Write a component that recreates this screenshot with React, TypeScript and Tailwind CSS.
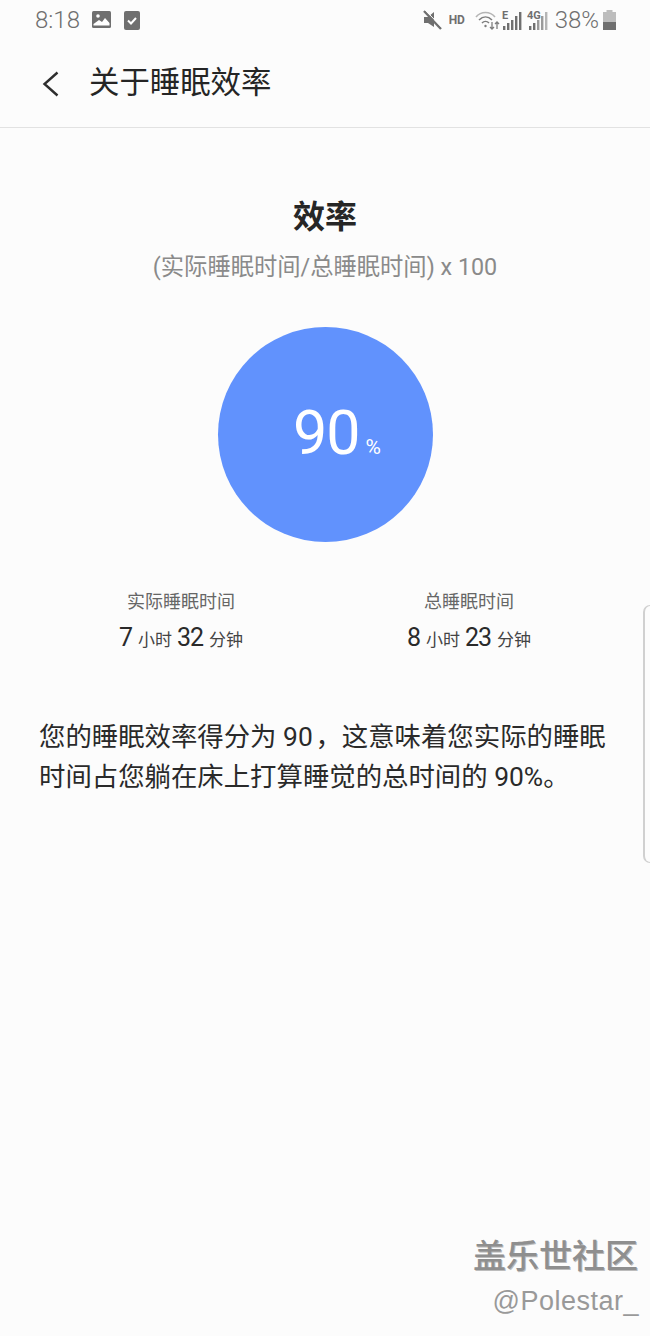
const cjk = "font-['Roboto','Noto_Sans_CJK_SC',sans-serif]"

const StatusBar = () => (
    <div className="flex h-[40px] items-center justify-between pl-[35px] pr-[34px] text-[#6f6f6f]">
        <div className="flex items-center">
            <span className="text-[24px] leading-none font-light">8:18</span>
            <svg className="ml-[12px]" width="19" height="18" viewBox="0 0 19 18">
                <rect width="19" height="17" y="0" rx="1.5" fill="#6f6f6f" />
                <circle cx="6" cy="5" r="1.8" fill="#fff" />
                <path d="M1.5 13 L7 9 L10 11 L13 7 L17.5 12 V14.5 H1.5 Z" fill="#fff" />
            </svg>
            <svg className="ml-[13px]" width="16" height="19" viewBox="0 0 16 19">
                <rect width="16" height="19" rx="2" fill="#6f6f6f" />
                <path d="M4 9.5 L7 12.5 L12 7" stroke="#fff" strokeWidth="2" fill="none" />
            </svg>
        </div>
        <div className="flex items-center">
            <svg width="19" height="20" viewBox="0 0 19 20">
                <path d="M1 7 H5 L11 2 V17 L5 13 H1 Z" fill="#6f6f6f" />
                <path d="M1 1 L18 19" stroke="#6f6f6f" strokeWidth="2.4" />
                <path d="M2.2 0 L19 17.5" stroke="#fcfcfc" strokeWidth="1" />
            </svg>
            <span className="ml-[7px] w-[17px] text-[12px] leading-none font-bold font-['Roboto',sans-serif]">HD</span>
            <svg className="ml-[9px]" width="26" height="20" viewBox="0 0 26 20" fill="none" stroke="#7d7d7d">
                <path d="M1 7 C6 1 15 1 20 7" strokeWidth="1.6" stroke="#b5b5b5" />
                <path d="M4 10 C8 6 13 6 17 10" strokeWidth="1.6" />
                <path d="M7 13 C9 11 12 11 14 13" strokeWidth="1.6" />
                <circle cx="10.5" cy="16" r="1.2" fill="#7d7d7d" stroke="none" />
                <path d="M17 12 V19 M15 17 L17 19 L19 17 M22 19 V12 M20 14 L22 12 L24 14" strokeWidth="1.3" />
            </svg>
            <svg className="ml-[1px]" width="20" height="21" viewBox="0 0 20 21">
                <text x="0" y="9" fontSize="11" fontWeight="700" fill="#6f6f6f" fontFamily="Roboto">E</text>
                <rect x="1" y="16" width="2.4" height="4" fill="#6f6f6f" />
                <rect x="5" y="13" width="2.4" height="7" fill="#6f6f6f" />
                <rect x="9" y="10" width="2.4" height="10" fill="#6f6f6f" />
                <rect x="13" y="6" width="2.4" height="14" fill="#6f6f6f" />
                <rect x="17" y="2" width="2.4" height="18" fill="#6f6f6f" />
            </svg>
            <svg className="ml-[5px]" width="21" height="21" viewBox="0 0 21 21">
                <text x="0" y="9" fontSize="11" fontWeight="700" fill="#6f6f6f" fontFamily="Roboto">4G</text>
                <rect x="2" y="16" width="2.4" height="4" fill="#6f6f6f" />
                <rect x="6" y="13" width="2.4" height="7" fill="#6f6f6f" />
                <rect x="10" y="10" width="2.4" height="10" fill="#9a9a9a" />
                <rect x="14" y="6" width="2.4" height="14" fill="#9a9a9a" />
                <rect x="18" y="2" width="2.4" height="18" fill="#b5b5b5" />
            </svg>
            <span className="ml-[7px] text-[24px] leading-none font-light">38%</span>
            <svg className="ml-[4px]" width="13" height="20" viewBox="0 0 13 20">
                <rect x="3.5" y="0" width="6" height="2" fill="#bdbdbd" />
                <rect x="0" y="2" width="13" height="18" fill="#bdbdbd" />
                <rect x="0" y="12" width="13" height="8" fill="#6f6f6f" />
            </svg>
        </div>
    </div>
)

const Header = () => (
    <div className="flex h-[88px] items-center border-b border-[#e2e2e2] pl-[42px]">
        <svg width="18" height="26" viewBox="0 0 18 26" fill="none" stroke="#2e2e2e" strokeWidth="2.4">
            <path d="M15.5 1.5 L2.5 13 L15.5 24.5" />
        </svg>
        <span className="ml-[29px] text-[30.4px] leading-none text-[#252525]">关于睡眠效率</span>
    </div>
)

const Stat = ({ label, h, m }: { label: string; h: string; m: string }) => (
    <div className="flex w-[260px] flex-col items-center">
        <span className="text-[18px] leading-[26px] text-[#666666]">{label}</span>
        <div className="mt-[9px] flex items-baseline leading-[28px] text-[#2a2a2a]">
            <span className="text-[25px]">{h}</span>
            <span className="ml-[5px] text-[17px] text-[#444444]">小时</span>
            <span className="ml-[5px] text-[25px] tracking-[-1px]">{m}</span>
            <span className="ml-[6px] text-[17px] text-[#444444]">分钟</span>
        </div>
    </div>
)

export default function App() {
    return (
        <div className={`relative h-[1336px] w-[650px] overflow-hidden bg-[#fcfcfc] ${cjk}`}>
            <StatusBar />
            <Header />

            <div className="flex flex-col items-center">
                <h1 className="mt-[66px] text-[32px] leading-[46px] font-bold text-[#262626]">效率</h1>
                <p className="mt-[10px] text-[23.3px] leading-[34px] text-[#8a8a8a]">(实际睡眠时间/总睡眠时间) x 100</p>
                <div className="mt-[43px] flex h-[215px] w-[215px] items-baseline justify-center rounded-full bg-[#6192fd] pt-[70px] pl-[24px] text-white">
                    <span className="text-[61px] leading-[72px] tracking-[-1px]">90</span>
                    <span className="ml-[6px] text-[21px] leading-none">%</span>
                </div>
            </div>

            <div className="mt-[47px] flex justify-center gap-[28px]">
                <Stat label="实际睡眠时间" h="7" m="32" />
                <Stat label="总睡眠时间" h="8" m="23" />
            </div>

            <p className="mt-[63px] px-[39px] text-[26.4px] leading-[40px] text-[#2a2a2a]">
                {"您的睡眠效率得分为 90\u200A，这意味着您实际的睡眠时间占您躺在床上打算睡觉的总时间的 90%。"}
            </p>

            {/* edge panel handle */}
            <div className="absolute top-[605px] right-0 h-[258px] w-[7px] rounded-l-[7px] border-y border-l-2 border-[#d0d0d0]" />

            {/* watermark */}
            <div className="absolute top-[1238px] right-[12px] flex flex-col items-end text-[#8f8f8f]">
                <span className="text-[33px] leading-[38px] font-medium [text-shadow:1px_1px_0_#bcbcbc]">盖乐世社区</span>
                <span className="mt-[7px] mr-[-1px] text-[27px] leading-[36px] tracking-[0.5px] font-['Liberation_Sans',sans-serif] text-[#999999]">@Polestar_</span>
            </div>
        </div>
    )
}
